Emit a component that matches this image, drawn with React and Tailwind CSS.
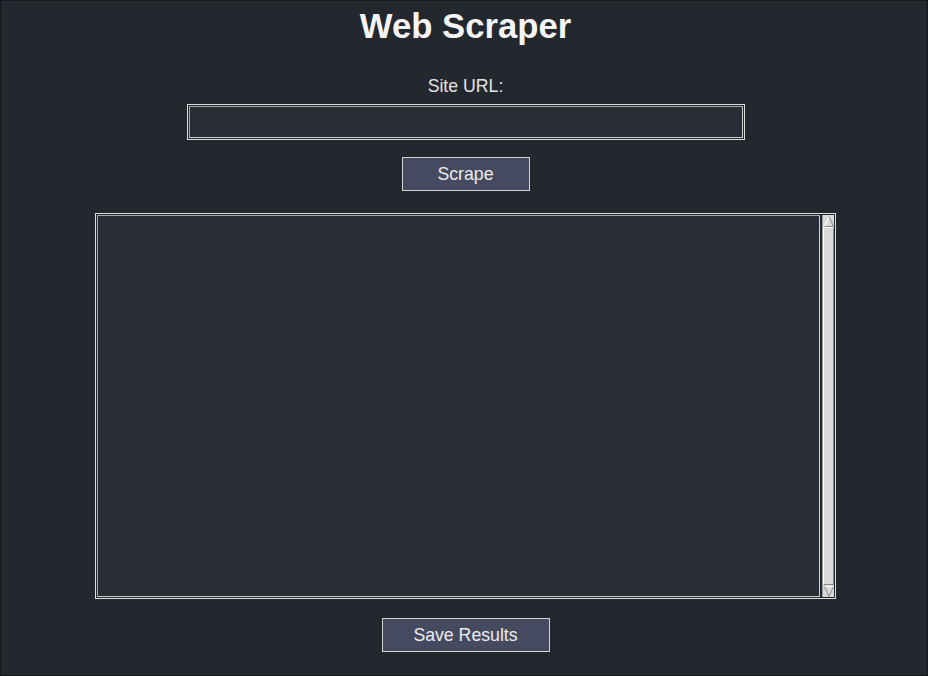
import React from 'react';

const font = { fontFamily: '"Liberation Sans", Arial, sans-serif' };

const Arrow = ({ down }) => (
  <svg width="10" height="11" viewBox="0 0 10 11" className="block">
    {down ? (
      <>
        <polygon points="0.5,0.5 9.5,0.5 5,10.5" fill="#d9d9d9" />
        <polyline points="0.5,0.5 9.5,0.5" stroke="#ffffff" strokeWidth="1" fill="none" />
        <polyline points="0.5,0.5 5,10.5 9.5,0.5" stroke="#8a8a8a" strokeWidth="1" fill="none" />
      </>
    ) : (
      <>
        <polygon points="5,0.5 9.5,10.5 0.5,10.5" fill="#d9d9d9" />
        <polyline points="0.5,10.5 5,0.5" stroke="#ffffff" strokeWidth="1" fill="none" />
        <polyline points="5,0.5 9.5,10.5 0.5,10.5" stroke="#8a8a8a" strokeWidth="1" fill="none" />
      </>
    )}
  </svg>
);

const Button = ({ children, width }) => (
  <button
    className={`${width} h-[34px] pt-[2px] border border-[#d4d4d4] bg-[#464a60] text-[17.7px] text-[#ececec] leading-none`}
    style={font}
  >
    {children}
  </button>
);

export default function App() {
  return (
    <div
      className="w-[928px] h-[676px] border border-[#15171b] bg-[#23272e] flex flex-col items-center pl-[3px] overflow-hidden"
      style={font}
    >
      <h1 className="mt-[5px] h-[40px] text-[34.7px] font-bold leading-[40px] text-[#f4f4f4]">
        Web Scraper
      </h1>

      <label className="mt-[30px] h-[20px] text-[17.7px] leading-[20px] text-[#e4e4e4]">Site URL:</label>

      <div className="mt-[8px] w-[558px] h-[36px] border border-[#dcdcdc] p-px">
        <input
          type="text"
          className="w-full h-full border border-t-[#a8a8a8] border-l-[#a8a8a8] border-b-[#cfcfcf] border-r-[#cfcfcf] bg-[#2a2d35] outline-none text-[#e4e4e4] px-1"
        />
      </div>

      <div className="mt-[17px]">
        <Button width="w-[128px]">Scrape</Button>
      </div>

      <div className="mt-[22px] w-[741px] h-[386px] border border-[#dcdcdc] p-px flex">
        <div className="flex-1 border border-t-[#a8a8a8] border-l-[#a8a8a8] border-b-[#cfcfcf] border-r-[#cfcfcf] bg-[#2a2d35]" />
        <div className="ml-[2px] w-[12px] bg-[#d9d9d9] border-l border-[#9a9a9a] flex flex-col">
          <div className="h-[12px] flex items-center justify-center">
            <Arrow />
          </div>
          <div className="flex-1 border border-t-white border-l-white border-b-[#8a8a8a] border-r-[#8a8a8a] bg-[#d9d9d9]" />
          <div className="h-[12px] flex items-center justify-center">
            <Arrow down />
          </div>
        </div>
      </div>

      <div className="mt-[19px]">
        <Button width="w-[168px]">Save Results</Button>
      </div>
    </div>
  );
}
